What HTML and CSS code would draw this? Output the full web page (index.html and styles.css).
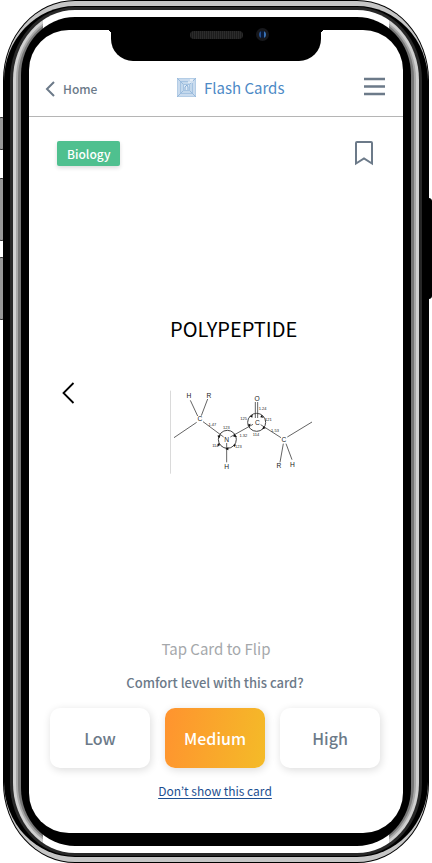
FILE: index.html
```html
<!DOCTYPE html>
<html lang="en">
<head>
<meta charset="utf-8">
<meta name="viewport" content="width=device-width, initial-scale=1">
<title>Flash Cards</title>
<link rel="stylesheet" href="styles.css">
</head>
<body>
<div class="phone">
  <span class="side-key mute"></span>
  <span class="side-key volume-up"></span>
  <span class="side-key volume-down"></span>
  <span class="side-key power"></span>
  <div class="ring edge"><div class="ring steel"><div class="ring band"><div class="ring rim">
  <div class="ring shine light"><div class="ring shine mid"><div class="ring shine dim"><div class="ring bezel">
    <div class="screen">
      <div class="notch">
        <span class="speaker"></span>
        <span class="camera"></span>
      </div>
      <header class="topbar">
        <a class="back" href="#home">
          <svg width="11" height="16" viewBox="0 0 11 16" fill="none" stroke="currentColor" stroke-width="2"><path d="M9 1 2 8l7 7"/></svg>
          Home
        </a>
        <h1 class="brand">
          <svg width="19" height="19" viewBox="0 0 19 19">
            <rect width="19" height="19" fill="#c9dbee"/>
            <path d="M.5.5h18v18H.5z" fill="none" stroke="#b4cde6"/>
            <path d="M3.500 3.500h12v12h-12z" fill="#c3d8ec" stroke="#a5c3e1"/>
            <path d="M0 0l7 7M19 0l-7 7M0 19l7-7M19 19l-7-7" stroke="#97b9dc"/>
            <path d="M6.500 6.500h6v6h-6z" fill="#dce9f5" stroke="#a5c3e1"/>
            <path d="M8 12V9l2-2 1 2v3" fill="none" stroke="#86add6"/>
            <path d="M11 4h5M13 2h3" stroke="#fff"/>
          </svg>
          Flash Cards
        </h1>
        <button class="menu" type="button" aria-label="Menu">
          <svg width="21" height="19" viewBox="0 0 21 19" stroke="currentColor" stroke-width="2.600"><path d="M0 2h21M0 9.500h21M0 17h21"/></svg>
        </button>
      </header>
      <main class="card">
        <div class="card-head">
          <span class="tag">Biology</span>
          <button class="bookmark" type="button" aria-label="Bookmark">
            <svg width="18" height="25" viewBox="0 0 18 25" fill="none" stroke="currentColor" stroke-width="2"><path d="M1 22.500V2q0-1 1-1h14q1 0 1 1v20.500l-8-5z"/></svg>
          </button>
        </div>
        <div class="card-body">
          <button class="previous" type="button" aria-label="Previous card">
            <svg width="13" height="22" viewBox="0 0 13 22" fill="none" stroke="currentColor" stroke-width="1.800"><path d="M11.500 1 1.500 11l10 10"/></svg>
          </button>
          <div class="question">
            <h2>POLYPEPTIDE</h2>
            <svg class="molecule" viewBox="30 15 426 252" role="img" aria-label="Peptide bond structure">
              <path d="M31 17v249" stroke="#bbb" stroke-width="2"/>
              <g fill="none" stroke="#444" stroke-width="2.500">
                <path d="M42 158l68-46M91 46l22 47M143 42l-19 50M129 110l62 46M211 156l68-38M200 174v58M286 51v48M293 51v48M302 119l61 39M382 156l74-45M370 176l-10 56M378 176l18 48"/>
                <circle cx="202" cy="163" r="27" stroke-width="3"/>
                <circle cx="290" cy="112" r="27" stroke-width="3"/>
              </g>
              <path d="M172 152l10-2-4 10zM222 146l9 10-11-1zM196 192l9-6v10zM174 174l7 6-8 4zM228 178l-9 2 5 6zM269 94l9-5-1 9zM304 90l7 8-10-1zM263 119l9-3-3 9zM310 124l-3 9 10-3z" fill="#111"/>
              <g class="atoms">
                <text x="87" y="39">H</text><text x="147" y="38">R</text><text x="120" y="109">C</text>
                <text x="291" y="48">O</text><text x="292" y="119">C</text><text x="200" y="171">N</text>
                <text x="200" y="252">H</text><text x="372" y="172">C</text><text x="357" y="250">R</text><text x="397" y="246">H</text>
              </g>
              <g class="lengths">
                <text x="157" y="123">1.47</text><text x="199" y="133">123</text><text x="250" y="155">1.32</text>
                <text x="166" y="187">114</text><text x="235" y="189">123</text><text x="251" y="106">125</text>
                <text x="308" y="74">1.24</text><text x="325" y="107">121</text><text x="288" y="154">114</text><text x="345" y="140">1.53</text>
              </g>
            </svg>
          </div>
        </div>
        <p class="hint">Tap Card to Flip</p>
      </main>
      <section class="comfort" aria-labelledby="comfort-label">
        <h3 id="comfort-label">Comfort level with this card?</h3>
        <div class="levels">
          <button type="button">Low</button>
          <button class="selected" type="button" aria-pressed="true">Medium</button>
          <button type="button">High</button>
        </div>
        <a class="skip" href="#skip">Don’t show this card</a>
      </section>
    </div>
  </div></div></div></div>
  </div></div></div></div>
</div>
</body>
</html>
```
FILE: styles.css
```css
* { box-sizing: border-box; }

body {
  margin: 0;
  background: #fff;
  color: #6c7a89;
  font-family: "Noto Sans CJK JP", "Open Sans", sans-serif;
}

h1, h2, h3, p { margin: 0; }

button {
  padding: 0;
  border: 0;
  background: none;
  color: inherit;
  font: inherit;
  cursor: pointer;
}

svg { display: block; flex: none; }

/* Phone shell: each ring is one layer of the frame */
.phone {
  position: relative;
  display: flex;
  min-height: 100vh;
  padding: 0 3px;
}

.ring { display: flex; flex: 1; min-width: 0; }

.edge { position: relative; padding: 1px; border-radius: 72px / 80px; background: #000; }
.steel { padding: 5px 0; border-radius: 71px / 79px; background: #c6c6c6; }
.band { padding: 1px 6px; border-radius: 71px / 75px; background: #000; }
.rim { padding: 3px; border-radius: 65px / 73px; background: #282828; }
.shine {
  --tone: #d0d0d0;
  --reach: 30px;
  background: linear-gradient(to right, var(--tone) var(--reach), #fff var(--reach), #fff calc(100% - var(--reach)), var(--tone) calc(100% - var(--reach)));
}
.light { padding: 3px; border-radius: 62px / 70px; }
.mid { --tone: #a8a8a8; --reach: 27px; padding: 2px; border-radius: 59px / 66px; }
.dim { --tone: #777; --reach: 25px; padding: 2px 3px; border-radius: 57px / 63px; }
.bezel { padding: 13px 8px; border-radius: 54px / 58px; background: #000; }

.side-key {
  position: absolute;
  left: -2px;
  width: 7px;
  border: 1px solid #333;
  border-radius: 3px;
  background: #999;
}
.mute { top: 117px; height: 33px; }
.volume-up { top: 178px; height: 63px; }
.volume-down { top: 257px; height: 63px; }
.power { top: 198px; right: 0; left: auto; height: 101px; border-color: #000; background: #000; }

.screen {
  position: relative;
  display: flex;
  flex: 1;
  flex-direction: column;
  min-width: 0;
  border-radius: 40px;
  background: #fff;
}

.notch {
  position: absolute;
  top: -1px;
  left: 50%;
  width: 210px;
  height: 32px;
  transform: translateX(-50%);
  border-radius: 0 0 22px 22px;
  background: #000;
}
.notch::before, .notch::after {
  content: "";
  position: absolute;
  top: 1px;
  width: 4px;
  height: 4px;
}
.notch::before { left: -4px; background: radial-gradient(circle at 0 100%, transparent 4px, #000 4px); }
.notch::after { right: -4px; background: radial-gradient(circle at 100% 100%, transparent 4px, #000 4px); }
.speaker {
  position: absolute;
  top: 2px;
  left: 79px;
  width: 53px;
  height: 8px;
  border-radius: 4px;
  background: repeating-linear-gradient(to right, #2b2b2b 0 1px, #1c1c1c 1px 2px);
}
.camera {
  position: absolute;
  top: -1px;
  left: 145px;
  width: 13px;
  height: 13px;
  border: 3px solid #17181c;
  border-radius: 50%;
  background: linear-gradient(to right, #245090 2px, #0a1a38 2px 5px, #3a74b8 5px);
}

.topbar {
  display: flex;
  align-items: center;
  justify-content: space-between;
  height: 87px;
  padding: 31px 18px 0 16px;
  border-bottom: 1px solid #b5b5b5;
}
.back {
  display: flex;
  gap: 7px;
  align-items: center;
  color: #6c7a89;
  font-size: 12px;
  font-weight: 500;
  line-height: 20px;
  text-decoration: none;
}
.brand {
  display: flex;
  gap: 8px;
  align-items: center;
  padding-bottom: 2px;
  color: #4d8ac6;
  font-size: 15px;
  font-weight: 400;
  line-height: 24px;
}
.menu { padding-bottom: 5px; }

.card { display: flex; flex: 1; flex-direction: column; }
.card-head {
  display: flex;
  align-items: flex-start;
  justify-content: space-between;
  padding: 24px 30px 0 28px;
}
.tag {
  padding: 0 10px;
  border-radius: 2px;
  background: #4fc08f;
  box-shadow: 0 2px 4px rgba(0, 0, 0, .14);
  color: #fff;
  font-size: 12px;
  font-weight: 500;
  line-height: 25px;
}
.card-body {
  display: flex;
  flex: 1;
  align-items: center;
  margin-bottom: 18px;
  padding: 0 28px 0 33px;
}
.previous { width: 45px; color: #000; }
.question { width: 142px; margin: 0 auto; padding-top: 6px; }
.question h2 {
  color: #000;
  font-size: 20px;
  font-weight: 400;
  line-height: 24px;
}
.molecule { width: 100%; height: 84px; margin-top: 49px; }
.atoms, .lengths { fill: #222; font-family: "Liberation Sans", Arial, sans-serif; text-anchor: middle; }
.atoms { font-size: 20px; }
.lengths { font-size: 12px; }
.hint {
  color: #a5a8ab;
  font-size: 15px;
  line-height: 24px;
  text-align: center;
}

.comfort {
  display: flex;
  flex-direction: column;
  align-items: center;
  padding: 12px 23px 32px 21px;
}
.comfort h3 { font-size: 13px; font-weight: 500; line-height: 20px; }
.levels {
  display: grid;
  grid-template-columns: repeat(3, 1fr);
  gap: 15px;
  width: 100%;
  margin: 15px 0 13px;
}
.levels button {
  height: 60px;
  border-radius: 10px;
  background: #fff;
  box-shadow: 1px 2px 8px rgba(0, 0, 0, .14);
  font-size: 16px;
  font-weight: 500;
}
.levels .selected { background: linear-gradient(100deg, #ff932f, #f4bb28); color: #fff; }
.skip { color: #1d4f91; font-size: 12px; line-height: 20px; text-underline-offset: 2px; }
```
